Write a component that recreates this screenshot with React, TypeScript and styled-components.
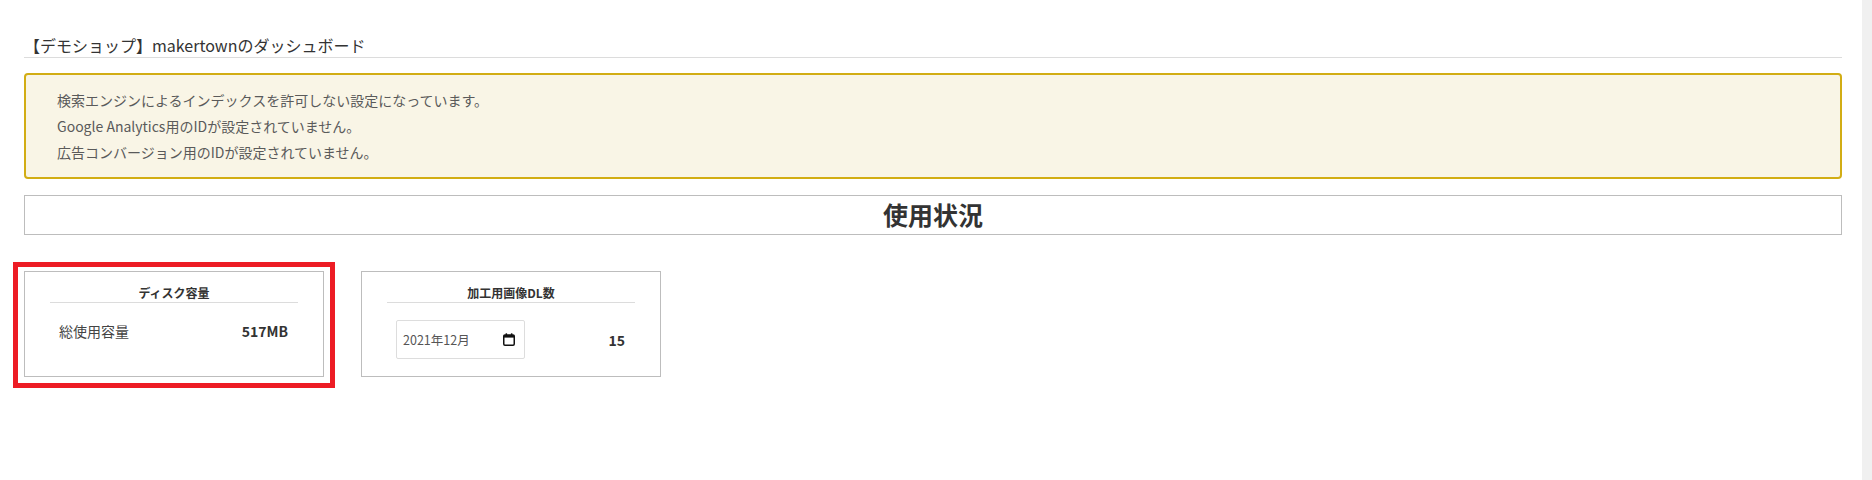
import React from "react";
import styled, { createGlobalStyle } from "styled-components";

const GlobalStyle = createGlobalStyle`
  html, body {
    margin: 0;
    padding: 0;
    background: #ffffff;
  }
  body {
    font-family: "Noto Sans CJK JP", "Noto Sans", sans-serif;
    color: #333333;
  }
  * { box-sizing: border-box; }
`;

const Page = styled.div`
  display: flex;
  min-height: 480px;
`;

const Main = styled.main`
  flex: 1;
  padding: 33px 20px 0 24px;
`;

const ScrollTrack = styled.div`
  width: 10px;
  background: #f0f0f0;
`;

const PageTitle = styled.h1`
  margin: 0;
  font-size: 16px;
  font-weight: 400;
  line-height: 24px;
  color: #333333;
  border-bottom: 1px solid #dcdcdc;
`;

const Alert = styled.ul`
  list-style: none;
  margin: 15px 0 0;
  padding: 12px 31px;
  background: #f9f5e6;
  border: 2px solid #d2ad14;
  border-radius: 4px;
`;

const AlertLine = styled.li`
  font-size: 14px;
  line-height: 26px;
  color: #5a5a5a;
`;

const SectionTitle = styled.h2`
  margin: 16px 0 0;
  height: 40px;
  border: 1px solid #bdbdbd;
  font-size: 25px;
  font-weight: 700;
  line-height: 37px;
  text-align: center;
  color: #333333;
`;

const CardRow = styled.div`
  display: flex;
  gap: 37px;
  margin-top: 36px;
`;

const Highlight = styled.div`
  position: relative;
  &::after {
    content: "";
    position: absolute;
    top: -9px;
    left: -11px;
    right: -11px;
    bottom: -11px;
    border: 5px solid #ed1c24;
    pointer-events: none;
  }
`;

const Card = styled.section`
  width: 300px;
  height: 106px;
  border: 1px solid #bdbdbd;
  padding: 12px 25px;
  background: #ffffff;
`;

const CardTitle = styled.h3`
  margin: 0;
  font-size: 12px;
  font-weight: 700;
  line-height: 18px;
  text-align: center;
  color: #333333;
  border-bottom: 1px solid #dcdcdc;
`;

const CardBody = styled.div`
  display: flex;
  align-items: center;
  justify-content: space-between;
  margin-top: 17px;
  padding: 0 10px 0 9px;
`;

const Label = styled.span`
  font-size: 14px;
  line-height: 22px;
  color: #444444;
`;

const Value = styled.span`
  font-size: 14px;
  font-weight: 700;
  line-height: 22px;
  color: #333333;
`;

const MonthField = styled.div`
  display: flex;
  align-items: center;
  justify-content: space-between;
  width: 129px;
  height: 39px;
  padding: 0 9px 0 6px;
  border: 1px solid #dddddd;
  border-radius: 2px;
  font-size: 12.5px;
  color: #555555;
`;

const CalendarIcon = () => (
  <svg width="12" height="13" viewBox="0 0 12 13" aria-hidden="true">
    <rect x="0.75" y="2" width="10.5" height="10.25" rx="1.2" fill="none" stroke="#111" strokeWidth="1.5" />
    <rect x="0.75" y="2" width="10.5" height="2.6" fill="#111" />
    <rect x="2.6" y="0.3" width="1.5" height="2.4" fill="#111" />
    <rect x="7.9" y="0.3" width="1.5" height="2.4" fill="#111" />
  </svg>
);

export default function App() {
  return (
    <>
      <GlobalStyle />
      <Page>
        <Main>
          <PageTitle>【デモショップ】makertownのダッシュボード</PageTitle>
          <Alert>
            <AlertLine>検索エンジンによるインデックスを許可しない設定になっています。</AlertLine>
            <AlertLine>Google Analytics用のIDが設定されていません。</AlertLine>
            <AlertLine>広告コンバージョン用のIDが設定されていません。</AlertLine>
          </Alert>
          <SectionTitle>使用状況</SectionTitle>
          <CardRow>
            <Highlight>
              <Card>
                <CardTitle>ディスク容量</CardTitle>
                <CardBody>
                  <Label>総使用容量</Label>
                  <Value>517MB</Value>
                </CardBody>
              </Card>
            </Highlight>
            <Card>
              <CardTitle>加工用画像DL数</CardTitle>
              <CardBody>
                <MonthField>
                  <span>2021年12月</span>
                  <CalendarIcon />
                </MonthField>
                <Value>15</Value>
              </CardBody>
            </Card>
          </CardRow>
        </Main>
        <ScrollTrack />
      </Page>
    </>
  );
}
